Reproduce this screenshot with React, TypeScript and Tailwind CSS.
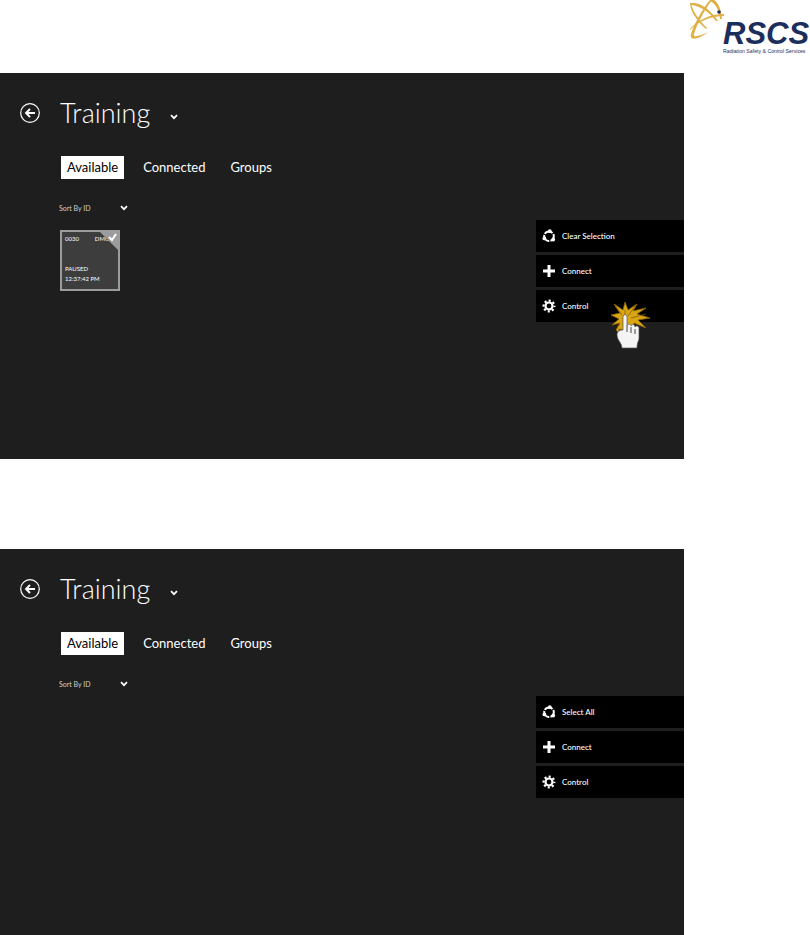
import React from "react";

const actions = (first: string) => [
  { id: 1, label: first, icon: <CycleIcon /> },
  { id: 2, label: "Connect", icon: <PlusIcon /> },
  { id: 3, label: "Control", icon: <GearIcon /> },
];

const CycleIcon = () => (
  <svg viewBox="0 0 14 14" className="size-[14px]" aria-hidden="true">
    <circle cx="7" cy="7.2" r="4.8" fill="none" stroke="white" strokeWidth="2" strokeDasharray="8.8 1.25" strokeDashoffset="3" />
    <circle cx="7.8" cy="2.2" r="1.9" fill="white" />
    <circle cx="2.4" cy="9.4" r="1.9" fill="white" />
    <circle cx="11.2" cy="10.6" r="1.9" fill="white" />
  </svg>
);

const PlusIcon = () => (
  <svg viewBox="0 0 14 14" className="size-[14px]" aria-hidden="true">
    <path d="M7 1v12M1 7h12" stroke="white" strokeWidth="3" />
  </svg>
);

const GearIcon = () => (
  <svg viewBox="0 0 14 14" className="size-[14px]" aria-hidden="true">
    <circle cx="7" cy="7" r="3.5" fill="none" stroke="white" strokeWidth="2.2" />
    <circle cx="7" cy="7" r="5.4" fill="none" stroke="white" strokeWidth="2.2" strokeDasharray="2.1 2.141" strokeDashoffset="1.05" />
  </svg>
);

const Chevron = ({ className }: { className?: string }) => (
  <svg viewBox="0 0 8 6" className={`h-[6px] w-2 ${className ?? ""}`} aria-hidden="true">
    <path d="M1 1.2 4 4.2 7 1.2" fill="none" stroke="white" strokeWidth="1.7" />
  </svg>
);

const Logo = () => (
  <svg viewBox="0 0 120 56" className="h-14 w-[120px]" role="img" aria-label="RSCS">
    <g fill="#dfb145">
      <path d="M1 3C10 2 20 9 28 21L26 21C19 12 11 6 1 5Z" />
      <path d="M20 0C13 8 4 24 1 34C-1 41 8 40 18 32C10 36 3 38 4 34C7 24 15 9 22 0Z" />
      <path d="M20 0H24C29 3 31 10 32 19L30 19C29 10 26 4 20 1Z" />
      <path d="M0 29C8 20 20 14 34 14V16C21 16 9 21 0 30Z" />
      <path d="M1 3C2 10 9 20 17 28L16 29C7 21 0 11 0 3Z" />
    </g>
    <circle cx="29" cy="12" r="1.8" fill="#1c2f5c" />
    <text x="33" y="44" fontSize="31" fontWeight="700" fontStyle="italic" fill="#1c2f5c" fontFamily="Liberation Sans, sans-serif">
      RSCS
    </text>
    <text x="33" y="53" fontSize="5.2" fill="#1c2f5c" fontFamily="Liberation Sans, sans-serif">
      Radiation Safety &amp; Control Services
    </text>
  </svg>
);

const ClickPointer = () => (
  <svg viewBox="0 0 40 48" className="absolute top-[229px] right-[33px] h-12 w-10" aria-hidden="true">
    <path
      d="M3 2 12 8 14 0 17 8 26 2 22 9 35 6 26 12 39 16 27 18 35 26 23 21 20 30 8 27 8 31 5 28 9 21 1 23 8 17 0 13 9 11Z"
      fill="#d9a514"
      stroke="#8a6508"
      strokeWidth="0.8"
    />
    <path
      d="M14 8 14 17M4 4 11 13M24 4 17 14M35 12 20 16"
      stroke="#7a5a08"
      strokeWidth="0.7"
    />
    <path
      d="M12 15c0-3 4-3 4 0v9c1-3 4-2 4 0 1-2 4-2 4 1 1-2 4-1 4 1v10c0 3-2 4-2 10H11c0-5-5-8-5-13 0-3 2-5 6-5Z"
      fill="#f4f4f4"
      stroke="#555"
      strokeWidth="0.7"
    />
    <path d="M16 24v6M20 25v6M24 27v5" stroke="#444" strokeWidth="1" />
  </svg>
);

const Tile = () => (
  <button className="relative mt-[14px] ml-px flex h-[61px] w-[60px] flex-col justify-between border-2 border-[#9c9c9c] bg-[#3d3d3d] px-[3px] pt-[2px] pb-[5px] text-left text-[6px] leading-[10px] text-white">
    <span className="flex w-full justify-between pr-[6px]">
      <span>0030</span>
      <span>DMC</span>
    </span>
    <span>
      PAUSED
      <br />
      12:37:42 PM
    </span>
    <svg viewBox="0 0 18 18" className="absolute top-0 right-0 size-[18px]" aria-hidden="true">
      <path d="M0 0h18v18Z" fill="#9c9c9c" />
      <path d="m9 5 3 3 4-6" fill="none" stroke="white" strokeWidth="2" />
    </svg>
  </button>
);

const Screen = ({ id, first, selected }: { id: string; first: string; selected?: boolean }) => {
  return (
    <section className="relative min-h-[386px] bg-[#1e1e1e] pt-5 text-white">
      <div className="flex h-10 items-center pl-5">
        <button aria-label="Back" className="size-5">
          <svg viewBox="0 0 20 20" className="size-5" aria-hidden="true">
            <circle cx="10" cy="10" r="9.3" fill="none" stroke="white" strokeWidth="1.2" />
            <path d="M15 10H6M10 6l-4 4 4 4" fill="none" stroke="white" strokeWidth="1.9" />
          </svg>
        </button>
        <h1 className="ml-5 text-[27px] leading-10 font-light">Training</h1>
        <button aria-label="Choose group" className="mt-2 ml-5">
          <Chevron />
        </button>
      </div>
      <div className="mt-[23px] flex gap-[13px] pl-[61px] text-[13px] leading-[23px]">
        <button className="bg-white px-[6px] text-black">Available</button>
        <button className="px-[6px]">Connected</button>
        <button className="px-[6px]">Groups</button>
      </div>
      <div className="mt-[21px] flex justify-between">
        <div className="pl-[59px]">
          <div className="relative flex items-center">
            <label htmlFor={id} className="sr-only">
              Sort order
            </label>
            <select id={id} className="h-4 w-[69px] appearance-none text-[7px] leading-4 text-[#d0d0d0]">
              <option>Sort By ID</option>
            </select>
            <Chevron className="pointer-events-none absolute right-0" />
          </div>
          {selected && <Tile />}
        </div>
        <div className="mt-5 flex w-[148px] flex-col gap-[3px]">
          {actions(first).map((action) => (
            <button key={action.id} className="flex h-8 items-center gap-[6px] bg-black pl-[6px] text-[8px] font-medium">
              {action.icon}
              {action.label}
            </button>
          ))}
        </div>
      </div>
      {selected && <ClickPointer />}
    </section>
  );
};

const App = () => {
  return (
    <div className="bg-white font-['Lato',sans-serif]">
      <header className="flex h-[73px] justify-end">
        <Logo />
      </header>
      <main className="flex flex-col gap-[90px] pr-[126px]">
        <Screen id="sort-top" first="Clear Selection" selected />
        <Screen id="sort-bottom" first="Select All" />
      </main>
    </div>
  );
};

export default App;
